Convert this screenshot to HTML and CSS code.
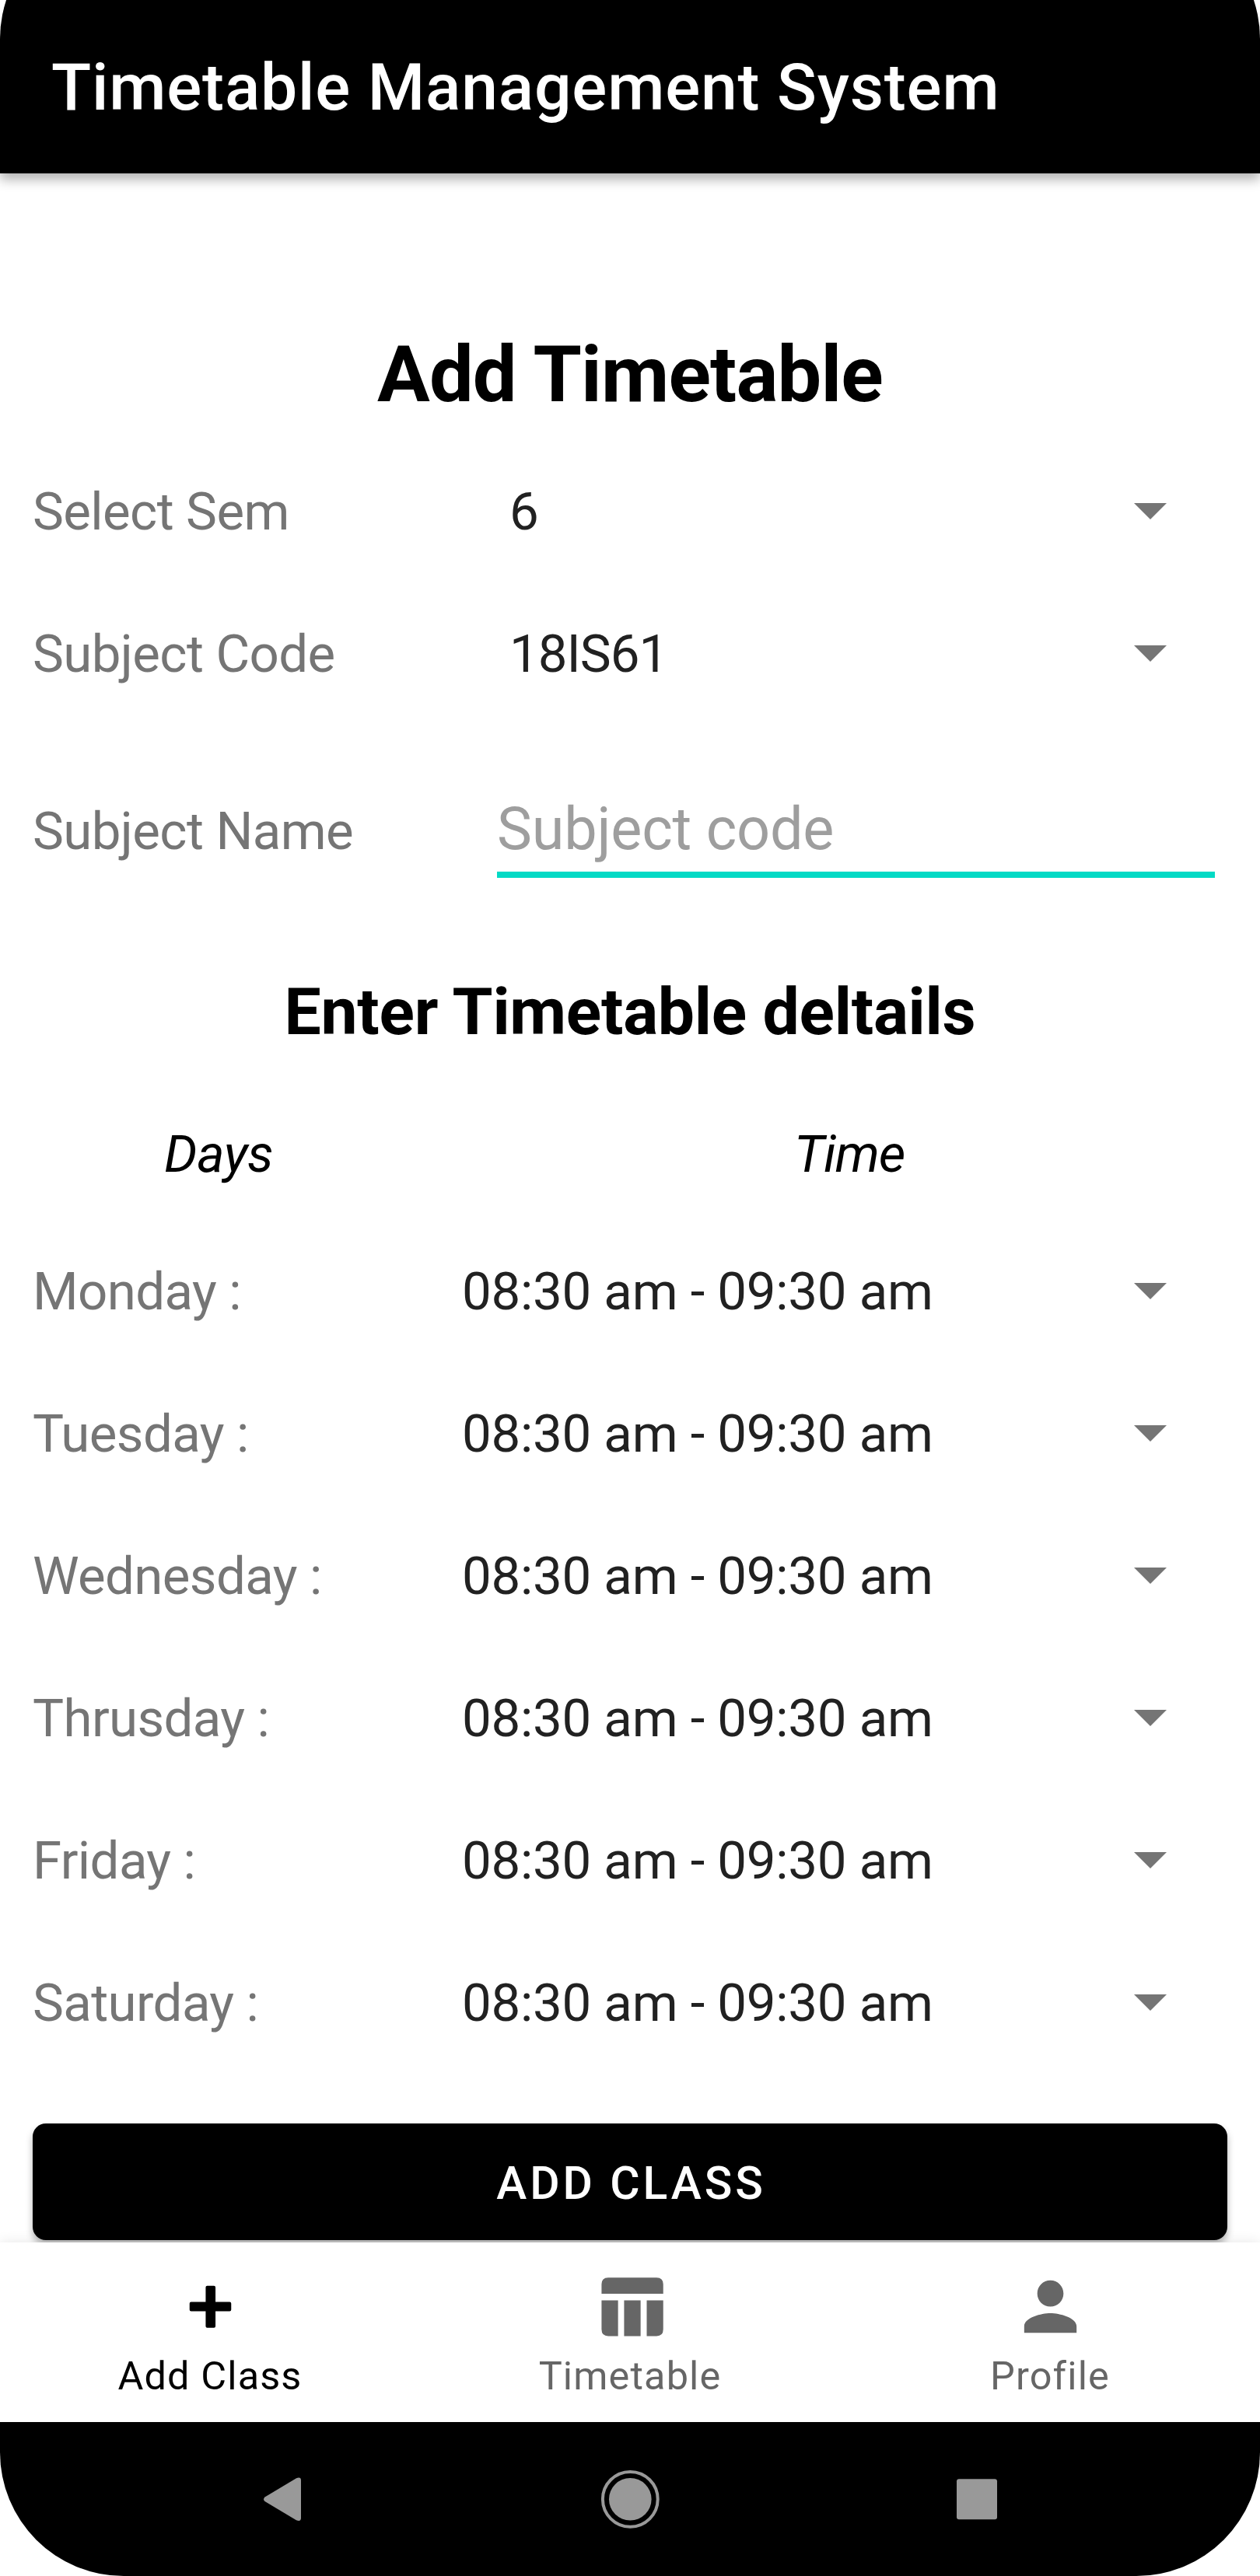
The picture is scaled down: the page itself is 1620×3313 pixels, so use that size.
FILE: index.html
```html
<!DOCTYPE html>
<html lang="en">
<head>
<meta charset="utf-8">
<title>Timetable Management System</title>
<link rel="stylesheet" href="styles.css">
</head>
<body>
<div class="screen">
  <header class="app-bar"><h1 class="app-title">Timetable Management System</h1></header>
  <main class="content">
    <h2 class="page-title">Add Timetable</h2>
    <div class="row row-indent"><span class="label">Select Sem</span><span class="value">6</span><span class="arrow"></span></div>
    <div class="row row-indent"><span class="label">Subject Code</span><span class="value">18IS61</span><span class="arrow"></span></div>
    <div class="name-row"><span class="label">Subject Name</span><input class="field" type="text" placeholder="Subject code"></div>
    <h3 class="section-title">Enter Timetable deltails</h3>
    <div class="columns"><span class="col-days">Days</span><span class="col-time">Time</span></div>
    <div class="row"><span class="label">Monday :</span><span class="value">08:30 am - 09:30 am</span><span class="arrow"></span></div>
    <div class="row"><span class="label">Tuesday :</span><span class="value">08:30 am - 09:30 am</span><span class="arrow"></span></div>
    <div class="row"><span class="label">Wednesday :</span><span class="value">08:30 am - 09:30 am</span><span class="arrow"></span></div>
    <div class="row"><span class="label">Thrusday :</span><span class="value">08:30 am - 09:30 am</span><span class="arrow"></span></div>
    <div class="row"><span class="label">Friday :</span><span class="value">08:30 am - 09:30 am</span><span class="arrow"></span></div>
    <div class="row"><span class="label">Saturday :</span><span class="value">08:30 am - 09:30 am</span><span class="arrow"></span></div>
    <button class="submit" type="button">ADD CLASS</button>
  </main>
  <nav class="tabs">
    <a class="tab tab-active">
      <svg class="tab-icon" viewBox="0 0 100 100"><path d="M44 25.500q0-2 2-2h8.500q2 0 2 2v18.500h18q2 0 2 2v8q0 2-2 2h-18v19q0 2-2 2H46q-2 0-2-2v-19H25.500q-2 0-2-2v-8q0-2 2-2H44z"/></svg>
      <span class="tab-label">Add Class</span>
    </a>
    <a class="tab">
      <svg class="tab-icon" viewBox="0 0 100 100"><path d="M13.300 33.700V21.500q0-8.500 8.500-8.500h61.500q8.500 0 8.500 8.500v12.200zM13.300 42h21v45.500H21.800q-8.500 0-8.500-8.500zM42 42h21v45.500H42zM70.800 42h21v37q0 8.500-8.500 8.500H70.800z"/></svg>
      <span class="tab-label">Timetable</span>
    </a>
    <a class="tab">
      <svg class="tab-icon" viewBox="0 0 24 24"><path d="M12 12c2.210 0 4-1.790 4-4s-1.790-4-4-4-4 1.790-4 4 1.790 4 4 4zm0 2c-2.670 0-8 1.340-8 4v2h16v-2c0-2.660-5.330-4-8-4z"/></svg>
      <span class="tab-label">Profile</span>
    </a>
  </nav>
  <footer class="system-bar">
    <svg class="sys-icon" viewBox="0 0 80 80"><path d="M16.500 37.500L57 13.200Q63 11 63 16v48.500q0 5-6 2.800L16.500 43q-3-2.750 0-5.500z"/></svg>
    <svg class="sys-icon" viewBox="0 0 80 80"><circle class="ring" cx="40.300" cy="40.300" r="35.400"/><circle cx="40.300" cy="40.300" r="27.300"/></svg>
    <svg class="sys-icon" viewBox="0 0 80 80"><rect x="14" y="14.300" width="52" height="52" rx="3"/></svg>
  </footer>
</div>
</body>
</html>
```
FILE: styles.css
```css
* { box-sizing: border-box; }
html { background: #fff; }
body { margin: 0; font-family: Roboto, sans-serif; }

.screen {
  display: flex;
  flex-direction: column;
  width: 1620px;
  height: 3313px;
  overflow: hidden;
  background: #fff;
  clip-path: inset(-109px 0 0 0 round 159px);
}

.app-bar {
  position: relative;
  flex: none;
  height: 223px;
  padding: 63px 0 0 66px;
  background: #000;
  box-shadow: 0 8px 14px rgba(0, 0, 0, .3);
}
.app-title {
  margin: 0;
  font-size: 84px;
  line-height: 100px;
  font-weight: 500;
  letter-spacing: .83px;
  color: #fff;
}

.content {
  flex: none;
  display: flex;
  flex-direction: column;
  height: 2661px;
  padding: 199px 42px 0;
  overflow: hidden;
}

.page-title {
  margin: 0;
  height: 120px;
  font-size: 100.8px;
  line-height: 120px;
  font-weight: 700;
  letter-spacing: -.8px;
  text-align: center;
}

.row {
  display: grid;
  grid-template-columns: 552px 1fr 42px;
  align-items: center;
  flex: none;
  height: 183px;
  padding-right: 78px;
  font-size: 67.2px;
  line-height: 80px;
}
.row .label, .row .value { padding-top: 1px; }
.page-title + .row { margin-top: 24px; }
.row-indent { grid-template-columns: 613px 1fr 42px; }
.label { color: #757575; letter-spacing: -.6px; }
.value { color: #212121; letter-spacing: -.27px; }
.row-indent .value { letter-spacing: -1px; }
.arrow {
  width: 42px;
  height: 21px;
  background: #757575;
  clip-path: polygon(0 0, 100% 0, 50% 100%);
}

.name-row {
  display: grid;
  grid-template-columns: 597px 923px;
  align-items: end;
  flex: none;
  height: 197px;
  font-size: 67.2px;
  line-height: 80px;
}
.name-row .label { padding-bottom: 20px; }
.field {
  width: 923px;
  height: 110px;
  padding: 0 0 9px;
  border: 0;
  border-bottom: 8px solid #03dac5;
  outline: 0;
  background: none;
  font: 75.6px Roboto, sans-serif;
  letter-spacing: -.2px;
}
.field::placeholder { color: #9e9e9e; opacity: 1; }

.section-title {
  margin: 123px 0 0;
  font-size: 84px;
  line-height: 100px;
  font-weight: 700;
  letter-spacing: -.25px;
  text-align: center;
}
.columns {
  display: grid;
  grid-template-columns: 478px 1fr;
  margin-top: 92px;
  font-size: 67.2px;
  line-height: 80px;
  font-style: italic;
  letter-spacing: -.5px;
}
.col-days { padding-left: 169px; }
.col-time { padding-left: 501px; letter-spacing: -1px; }
.columns + .row { margin-top: 45px; }

.submit {
  flex: none;
  height: 150px;
  margin-top: 64px;
  padding: 3px 0 0 3px;
  border: 0;
  border-radius: 17px;
  background: #000;
  color: #fff;
  font: 500 58.8px Roboto, sans-serif;
  letter-spacing: 3.9px;
  box-shadow: 0 6px 10px rgba(0, 0, 0, .3);
}

.tabs {
  position: relative;
  flex: none;
  display: grid;
  grid-template-columns: 540px 540px 540px;
  height: 231px;
  background: #fff;
  box-shadow: 0 0 16px rgba(0, 0, 0, .1);
}
.tab {
  display: flex;
  flex-direction: column;
  align-items: center;
  padding-top: 32px;
  color: #666;
}
.tab-active { color: #000; }
.tab-icon { width: 101px; height: 101px; fill: currentColor; }
.tab-label {
  margin-top: 9px;
  font-size: 50.4px;
  line-height: 60px;
  letter-spacing: 1.15px;
}

.system-bar {
  flex: none;
  display: flex;
  justify-content: space-between;
  height: 198px;
  padding: 59px 324px 0;
  background: #000;
}
.sys-icon { width: 80px; height: 80px; fill: #999; }
.sys-icon .ring { fill: none; stroke: #999; stroke-width: 4; }
```
